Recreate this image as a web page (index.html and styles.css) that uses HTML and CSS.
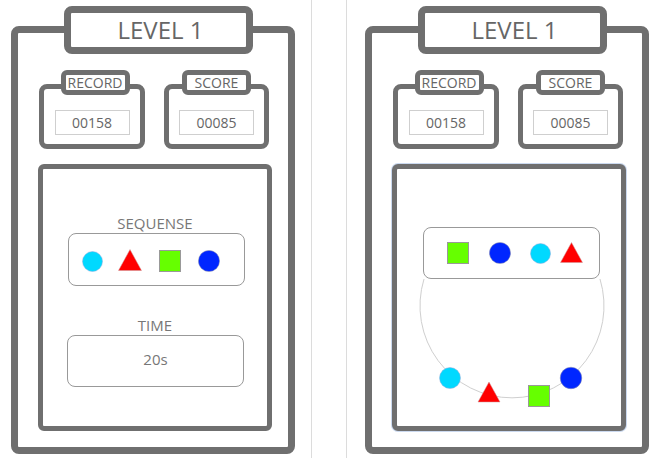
FILE: index.html
```html
<!DOCTYPE html>
<html>
<head>
<meta charset="utf-8">
<link rel="stylesheet" href="styles.css">
</head>
<body>
<div class="col col-left">
  <div class="frame">
    <div class="level-tab">LEVEL 1</div>
    <div class="stats">
      <div class="stat stat-record">
        <div class="stat-tab">RECORD</div>
        <div class="stat-value">00158</div>
      </div>
      <div class="stat stat-score">
        <div class="stat-tab">SCORE</div>
        <div class="stat-value">00085</div>
      </div>
    </div>
    <div class="game game-left">
      <div class="label">SEQUENSE</div>
      <div class="seq seq-left">
        <svg class="shape sh-circle" width="21" height="21" viewBox="0 0 21 21"><circle cx="10.5" cy="10.5" r="10" fill="#00d9ff" stroke="#9ad" stroke-width=".5"/></svg>
        <svg class="shape sh-tri" width="24" height="22" viewBox="0 0 24 22"><polygon points="12,0.5 23.5,21.5 0.5,21.5" fill="#ff0000" stroke="#c99" stroke-width=".5"/></svg>
        <svg class="shape sh-sq" width="22" height="22" viewBox="0 0 22 22"><rect x=".5" y=".5" width="21" height="21" fill="#66ff00" stroke="#999" stroke-width="1"/></svg>
        <svg class="shape sh-circle2" width="22" height="22" viewBox="0 0 22 22"><circle cx="11" cy="11" r="10.6" fill="#0026ff" stroke="#99a" stroke-width=".5"/></svg>
      </div>
      <div class="label label-time">TIME</div>
      <div class="timebox">20s</div>
    </div>
  </div>
</div>
<div class="spacer"></div>
<div class="col col-right">
  <div class="frame">
    <div class="level-tab">LEVEL 1</div>
    <div class="stats">
      <div class="stat stat-record">
        <div class="stat-tab">RECORD</div>
        <div class="stat-value">00158</div>
      </div>
      <div class="stat stat-score">
        <div class="stat-tab">SCORE</div>
        <div class="stat-value">00085</div>
      </div>
    </div>
    <div class="game game-right">
      <svg class="ring" width="225" height="257" viewBox="0 0 225 257">
        <path d="M27 110 A92 92 0 1 0 203 110" fill="none" stroke="#cfcfcf" stroke-width="1"/>
        <circle cx="53" cy="209" r="10.5" fill="#00d9ff" stroke="#9ad" stroke-width=".5"/>
        <polygon points="92,213 103,233 81,233" fill="#ff0000" stroke="#c99" stroke-width=".5"/>
        <rect x="131.5" y="216.5" width="21" height="21" fill="#66ff00" stroke="#999" stroke-width="1"/>
        <circle cx="174" cy="209" r="10.8" fill="#0026ff" stroke="#99a" stroke-width=".5"/>
      </svg>
      <div class="seq seq-right">
        <svg class="shape r-sq" width="22" height="22" viewBox="0 0 22 22"><rect x=".5" y=".5" width="21" height="21" fill="#66ff00" stroke="#999" stroke-width="1"/></svg>
        <svg class="shape r-c1" width="22" height="22" viewBox="0 0 22 22"><circle cx="11" cy="11" r="10.6" fill="#0026ff" stroke="#99a" stroke-width=".5"/></svg>
        <svg class="shape r-c2" width="21" height="21" viewBox="0 0 21 21"><circle cx="10.5" cy="10.5" r="10" fill="#00d9ff" stroke="#9ad" stroke-width=".5"/></svg>
        <svg class="shape r-tri" width="23" height="21" viewBox="0 0 23 21"><polygon points="11.5,0.5 22.5,20.5 0.5,20.5" fill="#ff0000" stroke="#c99" stroke-width=".5"/></svg>
      </div>
    </div>
  </div>
</div>
</body>
</html>
```

FILE: styles.css
```css
* { box-sizing: border-box; }

html, body {
  margin: 0;
  padding: 0;
  background: #fff;
}

body {
  display: flex;
  align-items: flex-start;
  font-family: "Open Sans", "Noto Sans", "DejaVu Sans", sans-serif;
  color: #666;
  width: 661px;
  height: 466px;
  overflow: hidden;
}

.col {
  height: 458px;
}

.col-left {
  width: 312px;
  padding-left: 11px;
  border-right: 1px solid #dcdcdc;
}

.spacer {
  width: 34px;
  flex: none;
}

.col-right {
  width: 315px;
  padding-left: 18px;
  border-left: 1px solid #dcdcdc;
}

.frame {
  margin-top: 26px;
  width: 284px;
  height: 428px;
  border: 7px solid #6f6f6f;
  border-radius: 8px;
  background: #fff;
}

.level-tab {
  margin: -27px 0 0 46px;
  width: 189px;
  height: 48px;
  border: 7px solid #6f6f6f;
  border-radius: 8px;
  background: #fff;
  font-size: 24px;
  line-height: 33px;
  text-align: center;
  color: #666;
  padding-left: 4px;
}

.stats {
  display: flex;
  gap: 19px;
  padding: 0 19px 0 21px;
  margin-top: 30px;
}

.stat {
  height: 65px;
  border: 5px solid #6f6f6f;
  border-radius: 8px;
  background: #fff;
}

.stat-record { width: 106px; }
.stat-score { width: 105px; }

.stat-tab {
  margin: -19px auto 0;
  width: 69px;
  height: 25px;
  border: 5px solid #6f6f6f;
  border-radius: 6px;
  background: #fff;
  font-size: 14px;
  line-height: 15px;
  text-align: center;
  color: #666;
  white-space: nowrap;
}

.stat-record .stat-tab { transform: translateX(3px); }

.stat-value {
  margin: 15px auto 0;
  width: 75px;
  height: 25px;
  border: 1px solid #cfcfcf;
  font-size: 14px;
  line-height: 23px;
  text-align: center;
  color: #666;
}

.game {
  margin: 15px 16px 0 20px;
  height: 267px;
  border: 5px solid #6f6f6f;
  border-radius: 6px;
  background: #fff;
  position: relative;
}

.game-left {
  padding-top: 44px;
}

.game-right {
  padding-top: 58px;
  box-shadow: 0 0 0 1px rgba(140, 170, 220, 0.45);
}

.label {
  height: 20px;
  font-size: 15px;
  line-height: 20px;
  text-align: center;
  color: #777;
}

.label-time {
  margin-top: 29px;
}

.seq {
  position: relative;
  width: 177px;
  height: 53px;
  border: 1px solid #999;
  border-radius: 8px;
  background: #fff;
  display: flex;
  align-items: center;
}

.shape { display: block; flex: none; }

.seq-left {
  margin-left: 25px;
  padding-left: 13px;
  padding-top: 3px;
}

.seq-left .sh-tri { margin-left: 15px; margin-top: -2px; }
.seq-left .sh-sq { margin-left: 17px; }
.seq-left .sh-circle2 { margin-left: 17px; }

.seq-right {
  margin-left: 26px;
  height: 52px;
  padding-left: 23px;
}

.seq-right .r-c1 { margin-left: 20px; }
.seq-right .r-c2 { margin-left: 19px; }
.seq-right .r-tri { margin-left: 9px; margin-top: -2px; }

.timebox {
  margin-left: 24px;
  width: 177px;
  height: 52px;
  border: 1px solid #999;
  border-radius: 8px;
  font-size: 15px;
  line-height: 46px;
  text-align: center;
  color: #777;
}

.ring {
  position: absolute;
  left: 0;
  top: 0;
}
```
